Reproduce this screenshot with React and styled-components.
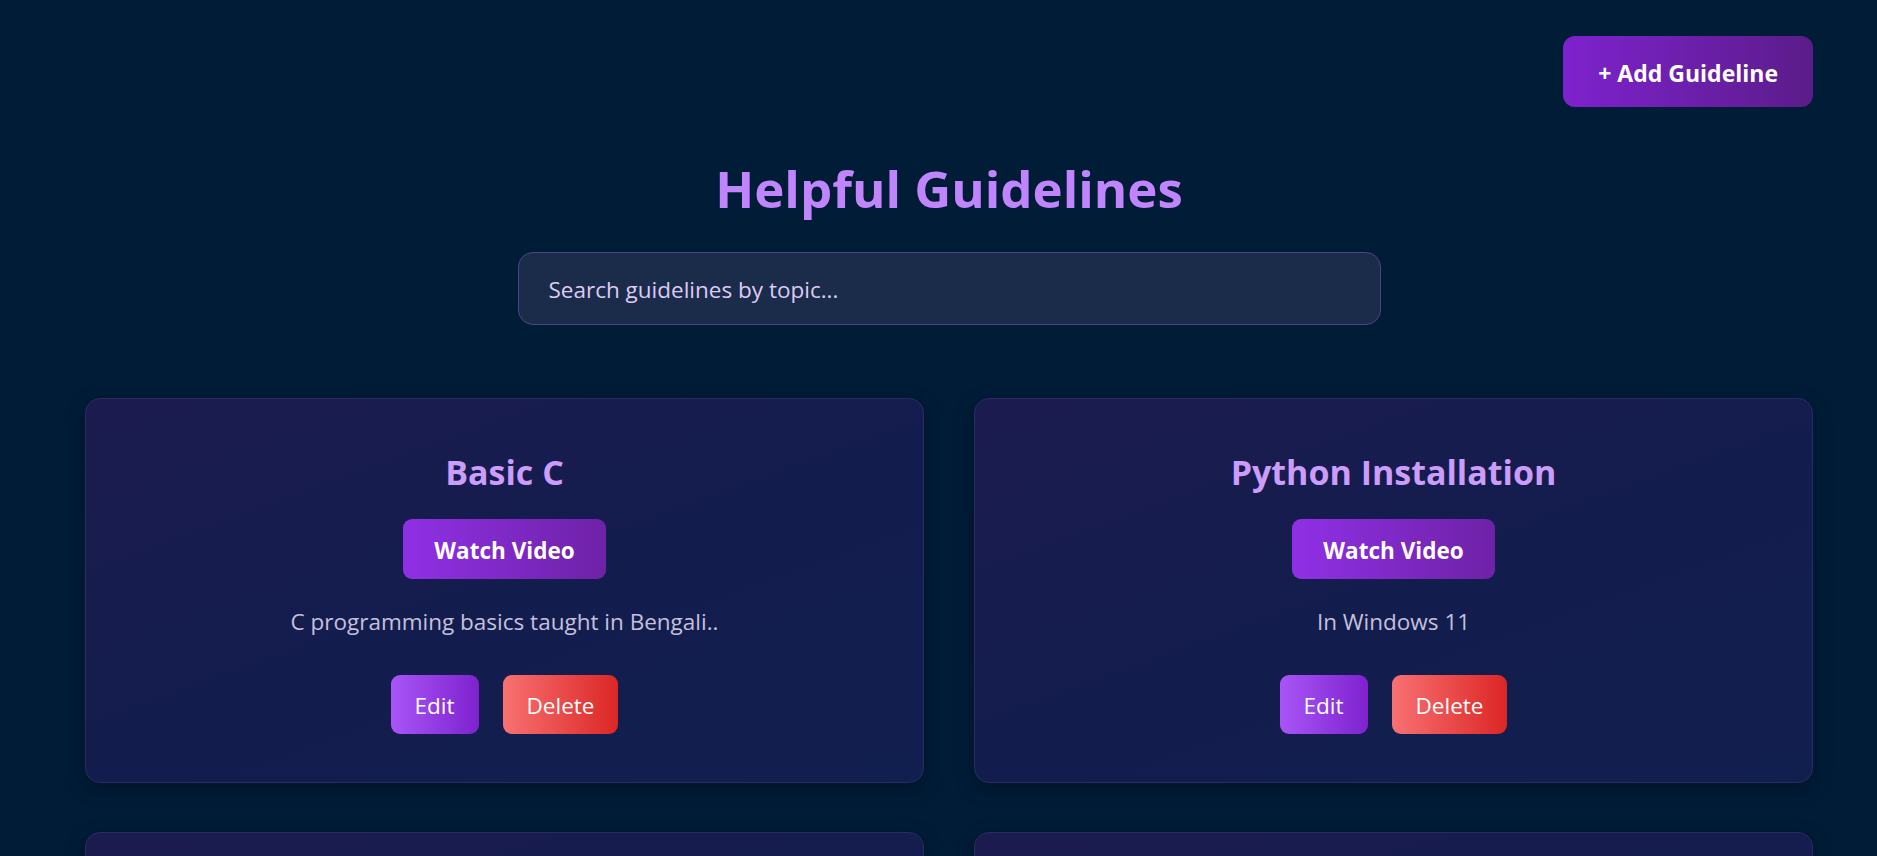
import React, { useState } from "react";
import styled, { createGlobalStyle } from "styled-components";

const GlobalStyle = createGlobalStyle`
  body {
    margin: 0;
    background: #011c37;
    font-family: "Open Sans", "Noto Sans", sans-serif;
  }
`;

const Page = styled.div`
  min-height: 100vh;
  box-sizing: border-box;
  padding: 36px 64px 60px 85px;
  background: #011c37;
`;

const Header = styled.div`
  display: flex;
  justify-content: flex-end;
`;

const AddButton = styled.button`
  height: 71px;
  padding: 2px 35px 0;
  border: none;
  border-radius: 12px;
  background: linear-gradient(90deg, #7e22ce, #5b1c89);
  color: #ffffff;
  font-family: inherit;
  font-size: 23px;
  font-weight: 700;
  cursor: pointer;
`;

const Title = styled.h1`
  margin: 51px 0 0;
  text-align: center;
  font-size: 51px;
  line-height: 60px;
  font-weight: 700;
  color: #c084fc;
`;

const SearchRow = styled.div`
  display: flex;
  justify-content: center;
  margin-top: 34px;
`;

const SearchInput = styled.input`
  box-sizing: border-box;
  width: 863px;
  height: 73px;
  padding: 2px 30px 0;
  border: 1px solid #4a4584;
  border-radius: 15px;
  background: #1b2c4b;
  color: #e6dcf8;
  font-family: inherit;
  font-size: 22.5px;
  outline: none;

  &::placeholder {
    color: #dccbf5;
  }
`;

const Grid = styled.div`
  display: grid;
  grid-template-columns: repeat(2, 1fr);
  column-gap: 50px;
  row-gap: 49px;
  margin-top: 73px;
`;

const Card = styled.div`
  display: flex;
  flex-direction: column;
  align-items: center;
  padding: 53px 24px 48px;
  border: 1px solid #2b2966;
  border-radius: 15px;
  background: linear-gradient(160deg, #1c1b50 0%, #131d4d 50%, #111f4f 100%);
  box-shadow: 0 6px 20px rgba(0, 0, 0, 0.25);
`;

const CardTitle = styled.h2`
  margin: 0;
  font-size: 34px;
  line-height: 40.8px;
  font-weight: 700;
  color: #cc9cfa;
`;

const WatchButton = styled.a`
  display: inline-flex;
  align-items: center;
  box-sizing: border-box;
  height: 60px;
  margin-top: 26px;
  padding: 3px 31px 0;
  border-radius: 9px;
  background: linear-gradient(90deg, #9030e6, #6e22a6);
  color: #ffffff;
  font-size: 22.5px;
  font-weight: 700;
  text-decoration: none;
  cursor: pointer;
`;

const Description = styled.p`
  margin: 26px 0 0;
  font-size: 22.5px;
  line-height: 34px;
  color: #c4c0de;
  text-align: center;
`;

const Actions = styled.div`
  display: flex;
  gap: 24px;
  margin-top: 36px;
`;

const ActionButton = styled.button`
  height: 59px;
  padding: 2px 24px 0;
  border: none;
  border-radius: 9px;
  background: ${(props) =>
    props.danger
      ? "linear-gradient(90deg, #f87171, #dc2626)"
      : "linear-gradient(90deg, #a855f7, #7e22ce)"};
  color: #ffffff;
  font-family: inherit;
  font-size: 22.5px;
  cursor: pointer;
`;

const guidelines = [
  { id: 1, topic: "Basic C", description: "C programming basics taught in Bengali.." },
  { id: 2, topic: "Python Installation", description: "In Windows 11" },
  { id: 3, topic: "Git & GitHub", description: "Version control for beginners" },
  { id: 4, topic: "Java OOP", description: "Classes, objects and inheritance" },
];

export default function App() {
  const [query, setQuery] = useState("");

  const shown = guidelines.filter((g) =>
    g.topic.toLowerCase().includes(query.toLowerCase())
  );

  return (
    <Page>
      <GlobalStyle />
      <Header>
        <AddButton>+ Add Guideline</AddButton>
      </Header>
      <Title>Helpful Guidelines</Title>
      <SearchRow>
        <SearchInput
          placeholder="Search guidelines by topic..."
          value={query}
          onChange={(e) => setQuery(e.target.value)}
        />
      </SearchRow>
      <Grid>
        {shown.map((g) => (
          <Card key={g.id}>
            <CardTitle>{g.topic}</CardTitle>
            <WatchButton>Watch Video</WatchButton>
            <Description>{g.description}</Description>
            <Actions>
              <ActionButton>Edit</ActionButton>
              <ActionButton danger>Delete</ActionButton>
            </Actions>
          </Card>
        ))}
      </Grid>
    </Page>
  );
}
